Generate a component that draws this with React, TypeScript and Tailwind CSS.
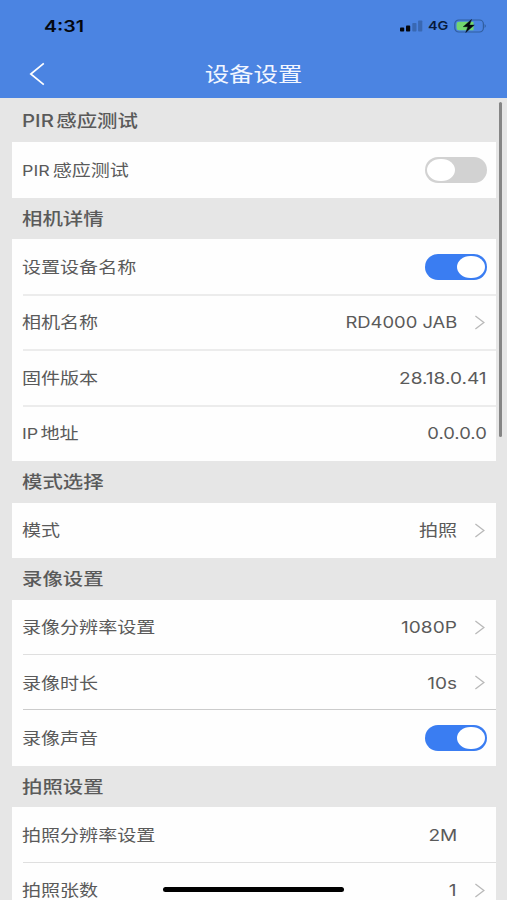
import type { ReactNode } from "react";

type RowData = {
  label: ReactNode;
  value?: string;
  snug?: boolean;
  arrow?: boolean;
  inset?: boolean;
  toggle?: "on" | "off";
  line?: string;
};

type SectionData = { title: ReactNode; tall?: boolean; rows: RowData[] };

const sections: SectionData[] = [
  {
    title: (
      <>
        PIR<span className="ml-[2px]">感应测试</span>
      </>
    ),
    tall: true,
    rows: [
      {
        label: (
          <>
            <span className="text-[15px]">PIR</span>
            <span className="ml-[2.5px]">感应测试</span>
          </>
        ),
        toggle: "off",
      },
    ],
  },
  {
    title: "相机详情",
    rows: [
      { label: "设置设备名称", toggle: "on", line: "bg-[#ececec] h-[2px] -bottom-px" },
      { label: "相机名称", value: "RD4000 JAB", snug: true, arrow: true, line: "bg-[#ececec] h-[2px] -bottom-px" },
      { label: "固件版本", value: "28.18.0.41", line: "bg-[#ececec] h-[2px] -bottom-px" },
      {
        label: (
          <>
            <span className="text-[15px]">IP</span>
            <span className="ml-[2px]">地址</span>
          </>
        ),
        value: "0.0.0.0",
        snug: true,
      },
    ],
  },
  { title: "模式选择", rows: [{ label: "模式", value: "拍照", arrow: true }] },
  {
    title: "录像设置",
    rows: [
      { label: "录像分辨率设置", value: "1080P", arrow: true, line: "bg-[#dfdfdf] h-px bottom-0" },
      { label: "录像时长", value: "10s", arrow: true, line: "bg-[#cccccc] h-px bottom-0" },
      { label: "录像声音", toggle: "on" },
    ],
  },
  {
    title: "拍照设置",
    rows: [
      { label: "拍照分辨率设置", value: "2M", inset: true, line: "bg-[#dfdfdf] h-px bottom-0" },
      { label: "拍照张数", value: "1", arrow: true },
    ],
  },
];

function Toggle({ on }: { on: boolean }) {
  return (
    <span
      className={
        on
          ? "flex h-[26.6px] w-[62.4px] items-center justify-end rounded-full bg-[#3a7df2] px-[2.5px]"
          : "flex h-[26.6px] w-[62.4px] items-center justify-start rounded-full bg-[#d2d2d2] px-[2.5px]"
      }
    >
      <span className="h-[22.6px] w-[27.5px] rounded-[50%] bg-white" />
    </span>
  );
}

function Row({ label, value, snug, arrow, inset, toggle, line }: RowData) {
  return (
    <div className="relative ml-[11px] flex h-[55.4px] items-center justify-between pr-[9px] text-[16px] leading-[20px] text-[#5a5a5a]">
      <span className="-ml-px origin-left scale-x-[1.19] whitespace-nowrap">{label}</span>
      {toggle && <Toggle on={toggle === "on"} />}
      {value && (
        <span className="flex items-center">
          <span
            className={`origin-right whitespace-nowrap ${snug ? "scale-x-[1.15]" : "scale-x-[1.19]"}`}
          >
            {value}
          </span>
          {arrow && (
            <svg width="10" height="15" viewBox="0 0 10 15" className="mr-[2px] ml-[18px]" fill="none" stroke="#b9b9b9" strokeWidth="1.3">
              <path d="M0.4 0.9 8.9 7.5 0.4 14.1" />
            </svg>
          )}
          {inset && <span className="w-[30px]" />}
        </span>
      )}
      {line && <span className={`absolute inset-x-0 ${line}`} />}
    </div>
  );
}

function StatusBar() {
  return (
    <div className="flex h-[52px] items-center justify-between pr-[20px] pl-[44px]">
      <span className="origin-left scale-x-[1.22] text-[16px] font-semibold text-[#04070f]">4:31</span>
      <div className="flex items-center text-[#081a3c]">
        <svg width="24" height="12" viewBox="0 0 24 12">
          <rect x="0" y="7.6" width="4.2" height="4" rx="0.8" fill="#04070f" />
          <rect x="6" y="5.6" width="4.2" height="6" rx="0.8" fill="#04070f" />
          <rect x="12.3" y="3" width="4.2" height="8.6" rx="0.8" fill="#3968b3" />
          <rect x="18.1" y="0.4" width="4.2" height="11.2" rx="0.8" fill="#3968b3" />
        </svg>
        <span className="ml-[3.5px] w-[22.5px] origin-left scale-x-[1.2] text-[12px] font-semibold">4G</span>
        <svg width="33" height="14" viewBox="0 0 33 14" className="ml-[4px]">
          <rect x="0.8" y="1" width="28.6" height="12" rx="4" fill="none" stroke="#315e9f" strokeWidth="1.2" />
          <path d="M5 2.7h14.5v8.6H5Q2.6 11.3 2.6 9V5Q2.6 2.7 5 2.7Z" fill="#72d66f" />
          <path d="M30.6 5Q33 7 30.6 9Z" fill="#315e9f" />
          <path d="M17.5 0.5 9.2 7.7h4.7l-2.2 5.8 8.6-7.4h-4.8Z" fill="#04070f" stroke="#04070f" strokeWidth="0.4" />
        </svg>
      </div>
    </div>
  );
}

export default function App() {
  return (
    <div className="relative flex h-[900px] w-[507px] flex-col overflow-hidden bg-[#e6e6e6] font-[Inter,'Noto_Sans_CJK_SC',sans-serif]">
      <header className="h-[98px] shrink-0 bg-[#4b84e2]">
        <StatusBar />
        <div className="grid h-[44px] grid-cols-[60px_1fr_60px] items-center">
          <svg width="16" height="24" viewBox="0 0 16 24" className="ml-[29px]" fill="none" stroke="#ffffff" strokeWidth="1.7">
            <path d="M14.8 1.3 1.8 12l13 10.7" />
          </svg>
          <h1 className="scale-x-[1.22] pt-px text-center text-[20px] leading-[24px] text-[#f2f6ff]">设备设置</h1>
        </div>
      </header>
      <main className="min-h-0 flex-1 overflow-hidden pr-[11px] pl-[12px]">
        {sections.map((section, index) => (
          <section key={index}>
            <h2
              className={`flex items-center pt-px pl-[10px] text-[17px] leading-[20px] font-medium text-[#5a5a5a] ${section.tall ? "h-[44.4px]" : "h-[41.6px]"}`}
            >
              <span className="origin-left scale-x-[1.2] whitespace-nowrap">{section.title}</span>
            </h2>
            <div className="bg-[#fefefe]">
              {section.rows.map((row, i) => (
                <Row key={i} {...row} />
              ))}
            </div>
          </section>
        ))}
      </main>
      <div className="absolute top-[102px] left-[499px] h-[335px] w-[3px] rounded-full bg-[#858585]" />
      <div className="absolute top-[887px] left-[163px] h-[5px] w-[181px] rounded-full bg-black" />
    </div>
  );
}
